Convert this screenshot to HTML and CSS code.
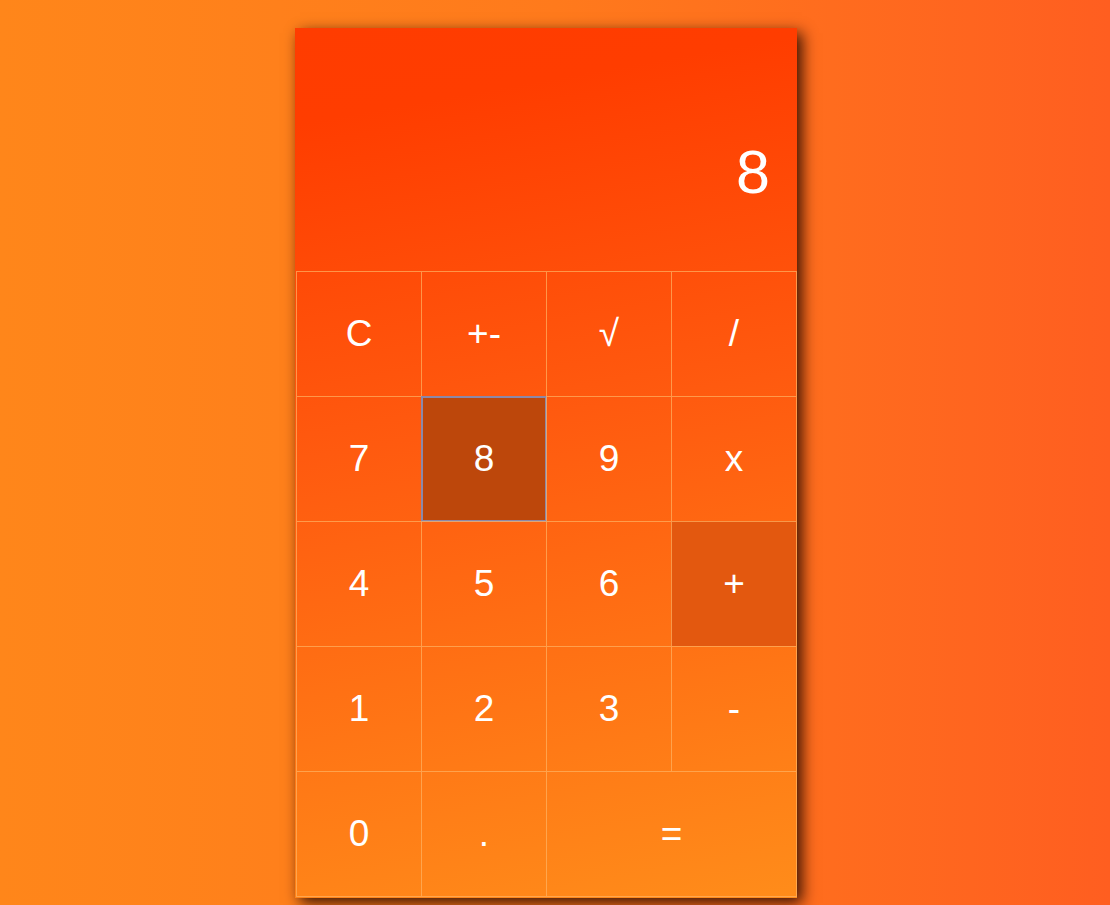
FILE: index.html
```html
<!DOCTYPE html>
<html>
<head>
<meta charset="utf-8">
<link rel="stylesheet" href="styles.css">
</head>
<body>
<div class="page">
  <div class="calc">
    <div class="display"><span class="value">8</span></div>
    <div class="keys">
      <div class="key">C</div>
      <div class="key">+-</div>
      <div class="key">√</div>
      <div class="key">/</div>
      <div class="key">7</div>
      <div class="key key-active">8</div>
      <div class="key">9</div>
      <div class="key">x</div>
      <div class="key">4</div>
      <div class="key">5</div>
      <div class="key">6</div>
      <div class="key key-op">+</div>
      <div class="key">1</div>
      <div class="key">2</div>
      <div class="key">3</div>
      <div class="key">-</div>
      <div class="key">0</div>
      <div class="key">.</div>
      <div class="key key-wide">=</div>
    </div>
  </div>
</div>
</body>
</html>
```
FILE: styles.css
```css
html, body {
  margin: 0;
  padding: 0;
  height: 100%;
}
body {
  background: linear-gradient(to right, #ff861a 0%, #ff7a1c 50%, #ff5e20 100%);
  font-family: "Liberation Sans", Arial, sans-serif;
  color: #fff;
  overflow: hidden;
}
.page {
  display: flex;
  justify-content: center;
  padding: 28px 18px 0 0;
}
.calc {
  width: 502px;
  box-sizing: border-box;
  padding: 0 0 1px 1px;
  display: flex;
  flex-direction: column;
  background: linear-gradient(170deg, #ff3c00 0%, #ff3d00 10%, #ff5a0f 45%, #ff8c1a 100%);
  box-shadow: 5px 5px 14px rgba(45, 12, 0, 0.95);
}
.display {
  height: 243px;
  box-sizing: border-box;
  display: flex;
  justify-content: flex-end;
  align-items: flex-start;
  padding: 109px 27px 0 0;
  margin-left: -1px;
}
.value {
  font-size: 61px;
  line-height: normal;
}
.keys {
  display: grid;
  grid-template-columns: repeat(4, 125px);
  grid-auto-rows: 125px;
  border-right: 1px solid rgba(255, 180, 100, 0.7);
  border-bottom: 1px solid rgba(255, 180, 100, 0.7);
}
.key {
  border-left: 1px solid rgba(255, 180, 100, 0.7);
  border-top: 1px solid rgba(255, 180, 100, 0.7);
  display: flex;
  align-items: center;
  justify-content: center;
  font-size: 37px;
}
.key-wide {
  grid-column: span 2;
}
.key-active {
  background: #bd470b;
  border: 2px solid #8c88a8;
  margin: 0 -1px -1px 0;
}
.key-op {
  background: #e3580f;
}
```
